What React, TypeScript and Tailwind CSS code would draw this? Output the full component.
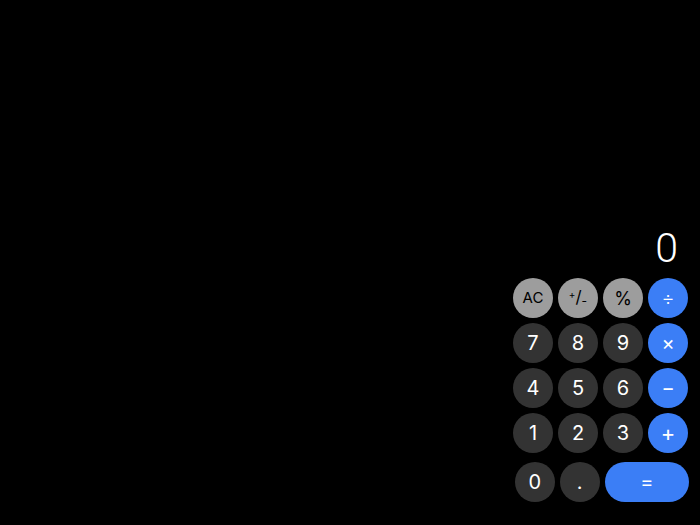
import React from "react";

const btn =
  "w-[40px] h-[40px] rounded-full flex items-center justify-center select-none";
const dark = `${btn} bg-[#333333] text-white text-[20px]`;
const gray = `${btn} bg-[#9d9d9d] text-black text-[15px]`;
const blue = `${btn} bg-[#3b7ef6] text-white text-[20px]`;

export default function App() {
  return (
    <div
      className="w-[700px] h-[525px] bg-black flex flex-col items-end justify-end pr-[11px] pb-[23px]"
      style={{ fontFamily: "Inter, 'Noto Sans', sans-serif" }}
    >
      <div className="w-[176px] flex flex-col">
        <div
          className="text-white text-[41px] font-light leading-none text-right pr-[11px] mb-[9px]"
          style={{ fontFamily: "Roboto, sans-serif" }}
        >
          0
        </div>
        <div className="grid grid-cols-[40px_40px_40px_40px] gap-[5px]">
          <div className={gray}>AC</div>
          <div className={gray}>
            <span className="relative -top-[4px] text-[10px]">+</span>
            <span className="text-[17px]">/</span>
            <span className="relative top-[3px] text-[12px]">-</span>
          </div>
          <div className={`${gray} text-[18px]`}>%</div>
          <div className={`${blue} font-light`}>÷</div>
          <div className={dark}>7</div>
          <div className={dark}>8</div>
          <div className={dark}>9</div>
          <div className={`${blue} text-[18px]`}>×</div>
          <div className={dark}>4</div>
          <div className={dark}>5</div>
          <div className={dark}>6</div>
          <div className={blue}>−</div>
          <div className={dark}>1</div>
          <div className={dark}>2</div>
          <div className={dark}>3</div>
          <div className={`${blue} text-[22px]`}>+</div>
        </div>
        <div className="flex gap-[5px] mt-[9px] pl-[2px]">
          <div className={dark}>0</div>
          <div className={dark}>.</div>
          <div className="w-[85px] h-[40px] rounded-full bg-[#3b7ef6] text-white text-[20px] flex items-center justify-center">
            =
          </div>
        </div>
      </div>
    </div>
  );
}
